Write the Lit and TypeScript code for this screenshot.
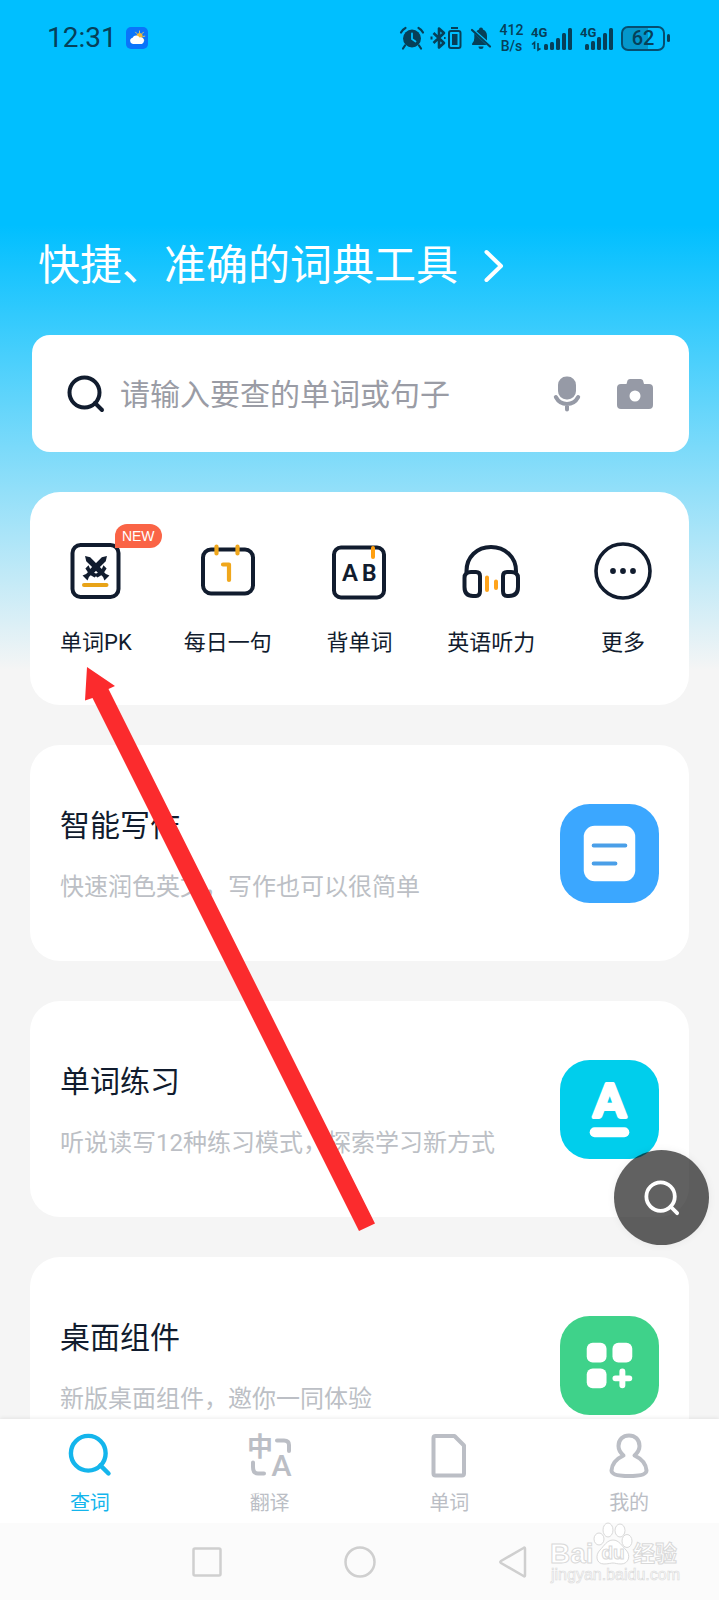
import { LitElement, html, svg, css } from "lit";
import { customElement, state } from "lit/decorators.js";
import { classMap } from "lit/directives/class-map.js";

/* ---------- status bar icons ---------- */

const weatherIcon = html`<svg class="ico" width="22" height="22" viewBox="0 0 22 22" aria-hidden="true">
  <rect width="22" height="22" rx="5" fill="#0a74fa" />
  <g stroke="#d9c56a" stroke-width="1" stroke-linecap="round">
    <path d="M13.500 4v1.600M17.400 5.200l-1 1.200M18.800 9.200l-1.600.3M9.600 5.200l1 1.200M18 13l-1.200-.7" />
  </g>
  <circle cx="13.600" cy="9" r="3" fill="#f0b63a" />
  <path d="M7 17a3.200 3.200 0 0 1-.4-6.300A4 4 0 0 1 13.600 10.400A3.400 3.400 0 1 1 14 17z" fill="#fff" />
</svg>`;

const alarmIcon = html`<svg class="ico" width="24" height="24" viewBox="0 0 24 24" aria-hidden="true">
  <circle cx="12" cy="12.500" r="9" fill="currentColor" />
  <path d="M1 6.500Q2.500 3.500 5.500 2M18.500 2Q21.500 3.500 23 6.500M5 19.500L3 22.500M19 19.500L21 22.500" fill="none" stroke="currentColor" stroke-width="2.200" stroke-linecap="round" />
  <path d="M12 7.500V13L15.500 15.500" fill="none" stroke="#00bfff" stroke-width="1.800" stroke-linecap="round" />
</svg>`;

const bluetoothIcon = html`<svg class="ico" width="32" height="24" viewBox="0 0 32 24" aria-hidden="true">
  <path d="M2.500 7L13 17L8 21.500V2.500L13 7L2.500 17" fill="none" stroke="currentColor" stroke-width="2.600" stroke-linejoin="round" />
  <path d="M0.500 10.500v3M13 12h1.600" stroke="currentColor" stroke-width="2" />
  <path d="M20 2h7" stroke="currentColor" stroke-width="2" />
  <rect x="18" y="5" width="11.500" height="17" rx="2" fill="none" stroke="currentColor" stroke-width="2" />
  <rect x="21" y="8" width="5.500" height="11" fill="currentColor" />
</svg>`;

const bellOffIcon = html`<svg class="ico" width="22" height="24" viewBox="0 0 22 24" aria-hidden="true">
  <path d="M9 3.500a2 2 0 0 1 4 0Q17 5.200 17 10V14.500L6.500 5.200Q7.500 4 9 3.500zM4.600 7.500L16.500 19H2.300Q1.500 18 2.500 17Q4.300 15.500 4.300 12V8.500zM8.500 20.500h5a2.500 2.500 0 0 1-5 0z" fill="currentColor" />
  <path d="M2 4L20 20.500" stroke="currentColor" stroke-width="2.200" stroke-linecap="round" />
</svg>`;

const bars = (x: number, heights: number[]) =>
  heights.map((h, i) => svg`<rect x=${x + i * 6} y=${24 - h} width="4" height=${h} rx="1.500" />`);

const signalIcon = (traffic: boolean) => html`<svg class="ico" width=${traffic ? 42 : 34} height="24" viewBox="0 0 ${traffic ? 42 : 34} 24" aria-hidden="true" fill="currentColor">
  <text class="gen" x="0" y="11">4G</text>
  ${traffic
    ? svg`<path d="M1 18.500L3.500 16.500V23M9.500 22.500L7 24V17" fill="none" stroke="currentColor" stroke-width="1.600" />${bars(13, [6, 8, 12, 17, 22])}`
    : bars(5, [6, 9, 13, 17, 22])}
</svg>`;

/* ---------- page icons ---------- */

const magnifier = (size: number, width: number) => html`<svg class="ico" width=${size} height=${size} viewBox="0 0 38 38" aria-hidden="true" fill="none" stroke="currentColor" stroke-linecap="round" stroke-width=${width}>
  <circle cx="17.500" cy="17.500" r="15" />
  <path d="M28 28L35 35" />
</svg>`;

const chevron = html`<svg class="ico" width="20" height="34" viewBox="0 0 20 34" aria-hidden="true">
  <path d="M2.500 3L17 17L2.500 31" fill="none" stroke="#fff" stroke-width="4" stroke-linecap="round" stroke-linejoin="round" />
</svg>`;

const micIcon = html`<svg class="ico" width="28" height="36" viewBox="0 0 28 36" aria-hidden="true">
  <rect x="5" y="0.500" width="18" height="23" rx="8.500" fill="currentColor" />
  <path d="M2.800 21Q6.500 28 14 28T25.200 21M14 28V33.500" fill="none" stroke="currentColor" stroke-width="4" stroke-linecap="round" />
</svg>`;

const cameraIcon = html`<svg class="ico" width="36" height="32" viewBox="0 0 36 32" aria-hidden="true">
  <path fill-rule="evenodd" d="M4 6H9.500L10.500 2.500Q11 1 13 1H23.500Q25.500 1 26 2.500L27 6H32Q36 6 36 10V27Q36 31 32 31H4Q0 31 0 27V10Q0 6 4 6zM18 12.500a5.500 5.500 0 1 0 0 11a5.500 5.500 0 1 0 0-11z" fill="currentColor" />
</svg>`;

/* One sword, blade up, centred on the point where the two cross. */
const sword = svg`<path d="M-2.800 -11L0 -15.500L2.800 -11V5.500L6.500 4V8.500L2 9.500V12L3.500 15.500H-3.500L-2 12V9.500L-6.500 8.500V4L-2.800 5.500z" fill="currentColor" />`;

const pkIcon = html`<svg class="ico" width="60" height="60" viewBox="0 0 60 60" aria-hidden="true">
  <rect x="6.500" y="5" width="46" height="52" rx="8" fill="none" stroke="currentColor" stroke-width="4" />
  <g transform="translate(30 27)">
    <g transform="rotate(45)">${sword}</g>
    <g transform="rotate(-45)">${sword}</g>
  </g>
  <path d="M18 45H40.500" stroke="#e8a317" stroke-width="4" stroke-linecap="round" />
</svg>`;

const dayIcon = html`<svg class="ico" width="60" height="60" viewBox="0 0 60 60" aria-hidden="true">
  <rect x="5" y="9.500" width="50" height="44" rx="8" fill="none" stroke="currentColor" stroke-width="4" />
  <path d="M18.500 6.500V13.500M39.500 6.500V13.500M25 24.500H31V40" fill="none" stroke="#f0a71c" stroke-width="4.200" stroke-linecap="round" stroke-linejoin="round" />
</svg>`;

const abIcon = html`<svg class="ico" width="60" height="60" viewBox="0 0 60 60" aria-hidden="true">
  <rect x="5" y="7.500" width="50" height="50" rx="7" fill="none" stroke="currentColor" stroke-width="4" />
  <path d="M44 8V17" stroke="#ff9f0f" stroke-width="4" stroke-linecap="round" />
  <text class="ab" x="21" y="40.500" text-anchor="middle">A</text>
  <text class="ab" x="40" y="40.500" text-anchor="middle">B</text>
</svg>`;

const headphoneIcon = html`<svg class="ico" width="60" height="60" viewBox="0 0 60 60" aria-hidden="true" fill="none" stroke="currentColor" stroke-width="4">
  <path d="M5.500 32V31C5.500 17 16 7 30 7S55 17 55 31V32" />
  <path d="M10 32H15Q19 32 19 36V51Q19 56 15 56H12Q3.500 56 3.500 47V38Q3.500 32 10 32z" />
  <path d="M50 32H46Q42 32 42 36V51Q42 56 46 56H48Q57 56 57 47V38Q57 32 50 32z" />
  <path d="M26 37.500V50M35 41.500V48" stroke="#ffa31a" stroke-linecap="round" />
</svg>`;

const moreIcon = html`<svg class="ico" width="60" height="60" viewBox="0 0 60 60" aria-hidden="true">
  <circle cx="30" cy="31" r="27" fill="none" stroke="currentColor" stroke-width="3.600" />
  <g fill="currentColor"><circle cx="20" cy="31" r="2.900" /><circle cx="30" cy="31" r="2.900" /><circle cx="40" cy="31" r="2.900" /></g>
</svg>`;

const writeArt = html`<svg class="ico" width="99" height="99" viewBox="0 0 100 100" aria-hidden="true">
  <rect width="100" height="100" rx="30" fill="#3ba7ff" />
  <rect x="24" y="22" width="52" height="56" rx="11" fill="#fff" />
  <path d="M34 42H66M34 60H56" stroke="#4a9fe8" stroke-width="4" stroke-linecap="round" />
</svg>`;

const practiceArt = html`<svg class="ico" width="99" height="99" viewBox="0 0 100 100" aria-hidden="true">
  <rect width="100" height="100" rx="30" fill="#00ceec" />
  <text class="art-a" x="50" y="58" text-anchor="middle">A</text>
  <path d="M35 73H65" stroke="#fff" stroke-width="10" stroke-linecap="round" />
</svg>`;

const widgetArt = html`<svg class="ico" width="99" height="99" viewBox="0 0 100 100" aria-hidden="true">
  <rect width="100" height="100" rx="30" fill="#3fd28a" />
  <g fill="#fff">
    <rect x="27" y="27" width="20" height="20" rx="6" />
    <rect x="53" y="27" width="20" height="20" rx="6" />
    <rect x="27" y="53" width="20" height="20" rx="6" />
  </g>
  <path d="M56 63H70M63 56V70" stroke="#fff" stroke-width="6" stroke-linecap="round" />
</svg>`;

const translateIcon = html`<svg class="ico" width="44" height="44" viewBox="0 0 44 44" aria-hidden="true">
  <text class="zh" x="12" y="23" text-anchor="middle">中</text>
  <text class="tr-a" x="33.500" y="43" text-anchor="middle">A</text>
  <path d="M29 7.500H36Q41 7.500 41 12V18M5 29.500V34Q5 40.500 10 40.500H16" fill="none" stroke="currentColor" stroke-width="4" stroke-linecap="round" />
</svg>`;

const wordIcon = html`<svg class="ico" width="44" height="44" viewBox="0 0 44 44" aria-hidden="true">
  <path d="M8.500 3H27.500L37 12.500V40.500Q37 42.500 35 42.500H8.500Q6.500 42.500 6.500 40.500V5Q6.500 3 8.500 3z" fill="none" stroke="currentColor" stroke-width="4" stroke-linejoin="round" />
</svg>`;

const meIcon = html`<svg class="ico" width="44" height="44" viewBox="0 0 44 44" aria-hidden="true">
  <path d="M16.500 22.500C13 19.500 11.500 17 11.500 13C11.500 6.500 16 2.500 22 2.500S32.500 6.500 32.500 13C32.500 17 31 19.500 27.500 22.500C34 25.500 39 31 39.500 37.500C39.500 41.500 32 43 22 43S4.500 41.500 4.500 37.500C5 31 10 25.500 16.500 22.500z" fill="none" stroke="currentColor" stroke-width="4" stroke-linejoin="round" />
</svg>`;

const watermark = html`<svg class="ico" width="132" height="64" viewBox="0 0 132 64" aria-hidden="true" fill="#fff" stroke="#d9d9d9" stroke-width="1">
  <text class="wm-big" x="0" y="40">Bai</text>
  <ellipse cx="49" cy="16" rx="5" ry="6" /><ellipse cx="58" cy="7" rx="5" ry="7" />
  <ellipse cx="70" cy="7.500" rx="5" ry="6.500" /><ellipse cx="77" cy="18" rx="5" ry="6.500" />
  <path d="M63 17C69 17 72 23 76 27C81 32 79 41 71 41C67 41 65 40 63 40S58 41 54 41C46 41 45 32 50 27C54 23 57 17 63 17z" />
  <text class="wm-du" x="63" y="36" text-anchor="middle">du</text>
  <text class="wm-zh" x="83" y="38">经验</text>
  <text class="wm-url" x="1" y="57">jingyan.baidu.com</text>
</svg>`;

/* ---------- data ---------- */

const features = [
  { label: "单词PK", icon: pkIcon, badge: "NEW" },
  { label: "每日一句", icon: dayIcon },
  { label: "背单词", icon: abIcon },
  { label: "英语听力", icon: headphoneIcon },
  { label: "更多", icon: moreIcon },
];

const cards = [
  { title: "智能写作", text: "快速润色英文，写作也可以很简单", art: writeArt },
  { title: "单词练习", text: "听说读写12种练习模式，探索学习新方式", art: practiceArt },
  { title: "桌面组件", text: "新版桌面组件，邀你一同体验", art: widgetArt },
];

const tabs = [
  { label: "查词", icon: magnifier(44, 3.8) },
  { label: "翻译", icon: translateIcon },
  { label: "单词", icon: wordIcon },
  { label: "我的", icon: meIcon },
];

@customElement("app-root")
export class AppRoot extends LitElement {
  @state() private tab = 0;

  static styles = css`
    :host {
      display: flex;
      flex-direction: column;
      position: relative;
      height: 100vh;
      overflow: hidden;
      box-sizing: border-box;
      background: linear-gradient(#00bfff 225px, #f5f5f5 670px);
      font-family: Roboto, "Noto Sans CJK SC", sans-serif;
      color: #111c2e;
    }
    * { box-sizing: border-box; }
    button, input { font: inherit; color: inherit; border: 0; padding: 0; margin: 0; background: none; }
    button { cursor: pointer; }
    a { color: inherit; text-decoration: none; }
    h1, h2, p { margin: 0; font-weight: 400; }
    .ico { display: block; flex: none; overflow: visible; }

    .status { display: flex; align-items: center; justify-content: space-between; height: 76px; flex: none; padding: 0 49px 0 47px; color: #064059; }
    .left { display: flex; align-items: center; gap: 9px; }
    .clock { font-size: 28px; line-height: 32px; }
    .right { display: flex; align-items: center; gap: 7px; }
    .speed { min-width: 25px; font-size: 14px; line-height: 16px; font-weight: 500; text-align: center; }
    .speed span { display: block; }
    .gen { font: 700 13px Roboto, sans-serif; }
    .battery { display: flex; align-items: center; gap: 2px; }
    .cell { width: 44px; height: 25px; border: 2px solid #064e70; border-radius: 7px; background: linear-gradient(90deg, #0497cc 62%, transparent 62%); font-size: 20px; line-height: 21px; font-weight: 500; text-align: center; }
    .knob { width: 3px; height: 8px; border-radius: 2px; background: currentColor; }

    .main { flex: 1; min-height: 0; overflow: hidden; display: flex; flex-direction: column; gap: 40px; padding: 161px 30px 0; }
    .main > * { flex: none; }
    .headline { display: flex; align-items: center; gap: 26px; padding-left: 8px; color: #fff; line-height: 58px; }
    .headline h1 { font-size: 42px; }

    .search { display: flex; align-items: center; height: 117px; margin-left: 2px; padding: 0 36px 0 35px; border-radius: 18px; background: #fff; }
    .search input { flex: 1; min-width: 0; margin-left: 15px; padding-top: 2px; height: 60px; font-size: 30px; outline: 0; }
    .search input::placeholder { color: #9a9ca5; opacity: 1; }
    .search button { color: #969aa6; }
    .search .cam { margin-left: 36px; }

    .features { display: grid; grid-template-columns: repeat(5, 1fr); padding: 48px 0 47px; border-radius: 30px; background: #fff; }
    .feature { display: flex; flex-direction: column; align-items: center; gap: 28px; font-size: 22px; line-height: 30px; }
    .pic { position: relative; }
    .badge { position: absolute; left: 49px; top: -16px; padding: 0 7px; border-radius: 12px 12px 12px 0; background: #fa6446; color: #fff; font-family: "Liberation Sans", sans-serif; font-size: 14px; line-height: 24px; }
    .ab { font: 900 22px Lato, sans-serif; fill: currentColor; }

    .card { display: flex; align-items: center; justify-content: space-between; height: 216px; padding: 0 30px; border-radius: 30px; background: #fff; }
    .words { display: flex; flex-direction: column; gap: 21px; padding-top: 2px; }
    .card h2 { font-size: 30px; line-height: 44px; }
    .card p { font-size: 24px; line-height: 36px; color: #bcbfc5; }
    .art-a { font: 700 46px Lato, sans-serif; fill: #fff; stroke: #fff; stroke-width: 4; stroke-linejoin: round; }

    .tabs { flex: none; display: grid; grid-template-columns: repeat(4, 1fr); height: 104px; background: #fff; box-shadow: 0 -1px 4px rgba(0, 0, 0, 0.08); position: relative; }
    .tab { display: flex; flex-direction: column; align-items: center; justify-content: space-between; padding: 14px 0 8px; font-size: 20px; line-height: 24px; color: #bbbec5; }
    .tab.on { color: #14b5ec; }
    .zh { font: 700 26px "Noto Sans CJK SC", sans-serif; fill: currentColor; }
    .tr-a { font: 700 28px Lato, sans-serif; fill: currentColor; }

    .system { flex: none; display: flex; justify-content: center; align-items: center; gap: 122px; height: 77px; background: #fbfbfb; color: #cfcfcf; position: relative; }
    .mark { position: absolute; right: 37px; top: 0; pointer-events: none; }
    .wm-big { font: 700 28px "Liberation Sans", sans-serif; }
    .wm-du { font: 700 19px "Liberation Sans", sans-serif; }
    .wm-zh { font: 700 22px "Noto Sans CJK SC", sans-serif; }
    .wm-url { font: 400 16px "Liberation Sans", sans-serif; stroke-width: 0.6; }

    .fab { position: absolute; right: 10px; bottom: 355px; width: 95px; height: 95px; display: grid; place-items: center; border-radius: 50%; background: rgba(0, 0, 0, 0.62); color: #fff; box-shadow: 0 0 8px rgba(0, 0, 0, 0.06); }
    .arrow { position: absolute; left: 84px; top: 666px; pointer-events: none; }
  `;

  render() {
    return html`
      <header class="status">
        <div class="left"><span class="clock">12:31</span>${weatherIcon}</div>
        <div class="right">
          ${alarmIcon}${bluetoothIcon}${bellOffIcon}
          <span class="speed"><span>412</span><span>B/s</span></span>
          ${signalIcon(true)}${signalIcon(false)}
          <span class="battery"><span class="cell">62</span><span class="knob"></span></span>
        </div>
      </header>

      <main class="main">
        <a class="headline" href="#"><h1>快捷、准确的词典工具</h1>${chevron}</a>

        <form class="search" @submit=${(e: Event) => e.preventDefault()}>
          ${magnifier(38, 4)}
          <input type="text" aria-label="查词" placeholder="请输入要查的单词或句子" />
          <button type="button" aria-label="语音">${micIcon}</button>
          <button class="cam" type="button" aria-label="拍照">${cameraIcon}</button>
        </form>

        <nav class="features">
          ${features.map((f) => html`<a class="feature" href="#">
            <span class="pic">${f.icon}${f.badge ? html`<span class="badge">${f.badge}</span>` : null}</span>
            <span>${f.label}</span>
          </a>`)}
        </nav>

        ${cards.map((c) => html`<a class="card" href="#">
          <div class="words"><h2>${c.title}</h2><p>${c.text}</p></div>
          ${c.art}
        </a>`)}
      </main>

      <nav class="tabs">
        ${tabs.map((t, i) => html`<button class=${classMap({ tab: true, on: i === this.tab })} @click=${() => (this.tab = i)}>
          ${t.icon}<span>${t.label}</span>
        </button>`)}
      </nav>

      <footer class="system">
        <button aria-label="最近任务"><svg class="ico" width="30" height="30" viewBox="0 0 30 30"><rect x="1.500" y="1.500" width="27" height="27" rx="1.500" fill="none" stroke="currentColor" stroke-width="2.500" /></svg></button>
        <button aria-label="主屏幕"><svg class="ico" width="32" height="32" viewBox="0 0 32 32"><circle cx="16" cy="16" r="14.500" fill="none" stroke="currentColor" stroke-width="2.500" /></svg></button>
        <button aria-label="返回"><svg class="ico" width="30" height="32" viewBox="0 0 30 32"><path d="M27 2.500V29.500Q27 31 25.500 30L3 17Q1.500 16 3 15L25.500 2Q27 1 27 2.500z" fill="none" stroke="currentColor" stroke-width="2.500" /></svg></button>
        <div class="mark">${watermark}</div>
      </footer>

      <button class="fab" aria-label="搜索">${magnifier(36, 4)}</button>

      <svg class="ico arrow" width="292" height="566" viewBox="0 0 292 566" aria-hidden="true">
        <path d="M3 1L31 20L24.500 23L291 557.500L275 565L8.500 32L1 34.500z" fill="#fb2b2d" />
      </svg>
    `;
  }
}
